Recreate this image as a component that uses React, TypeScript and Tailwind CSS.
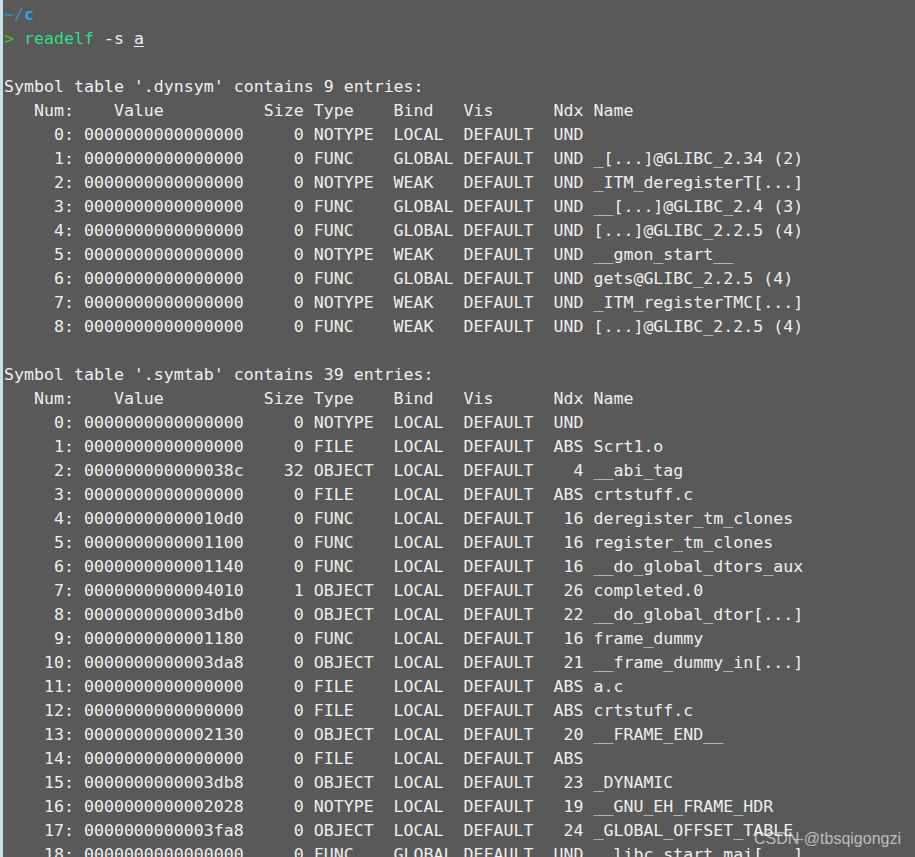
import React from 'react';

const dynsym: string[][] = [
  ['0', '0000000000000000', '0', 'NOTYPE', 'LOCAL', 'DEFAULT', 'UND', ''],
  ['1', '0000000000000000', '0', 'FUNC', 'GLOBAL', 'DEFAULT', 'UND', '_[...]@GLIBC_2.34 (2)'],
  ['2', '0000000000000000', '0', 'NOTYPE', 'WEAK', 'DEFAULT', 'UND', '_ITM_deregisterT[...]'],
  ['3', '0000000000000000', '0', 'FUNC', 'GLOBAL', 'DEFAULT', 'UND', '__[...]@GLIBC_2.4 (3)'],
  ['4', '0000000000000000', '0', 'FUNC', 'GLOBAL', 'DEFAULT', 'UND', '[...]@GLIBC_2.2.5 (4)'],
  ['5', '0000000000000000', '0', 'NOTYPE', 'WEAK', 'DEFAULT', 'UND', '__gmon_start__'],
  ['6', '0000000000000000', '0', 'FUNC', 'GLOBAL', 'DEFAULT', 'UND', 'gets@GLIBC_2.2.5 (4)'],
  ['7', '0000000000000000', '0', 'NOTYPE', 'WEAK', 'DEFAULT', 'UND', '_ITM_registerTMC[...]'],
  ['8', '0000000000000000', '0', 'FUNC', 'WEAK', 'DEFAULT', 'UND', '[...]@GLIBC_2.2.5 (4)'],
];

const symtab: string[][] = [
  ['0', '0000000000000000', '0', 'NOTYPE', 'LOCAL', 'DEFAULT', 'UND', ''],
  ['1', '0000000000000000', '0', 'FILE', 'LOCAL', 'DEFAULT', 'ABS', 'Scrt1.o'],
  ['2', '000000000000038c', '32', 'OBJECT', 'LOCAL', 'DEFAULT', '4', '__abi_tag'],
  ['3', '0000000000000000', '0', 'FILE', 'LOCAL', 'DEFAULT', 'ABS', 'crtstuff.c'],
  ['4', '00000000000010d0', '0', 'FUNC', 'LOCAL', 'DEFAULT', '16', 'deregister_tm_clones'],
  ['5', '0000000000001100', '0', 'FUNC', 'LOCAL', 'DEFAULT', '16', 'register_tm_clones'],
  ['6', '0000000000001140', '0', 'FUNC', 'LOCAL', 'DEFAULT', '16', '__do_global_dtors_aux'],
  ['7', '0000000000004010', '1', 'OBJECT', 'LOCAL', 'DEFAULT', '26', 'completed.0'],
  ['8', '0000000000003db0', '0', 'OBJECT', 'LOCAL', 'DEFAULT', '22', '__do_global_dtor[...]'],
  ['9', '0000000000001180', '0', 'FUNC', 'LOCAL', 'DEFAULT', '16', 'frame_dummy'],
  ['10', '0000000000003da8', '0', 'OBJECT', 'LOCAL', 'DEFAULT', '21', '__frame_dummy_in[...]'],
  ['11', '0000000000000000', '0', 'FILE', 'LOCAL', 'DEFAULT', 'ABS', 'a.c'],
  ['12', '0000000000000000', '0', 'FILE', 'LOCAL', 'DEFAULT', 'ABS', 'crtstuff.c'],
  ['13', '0000000000002130', '0', 'OBJECT', 'LOCAL', 'DEFAULT', '20', '__FRAME_END__'],
  ['14', '0000000000000000', '0', 'FILE', 'LOCAL', 'DEFAULT', 'ABS', ''],
  ['15', '0000000000003db8', '0', 'OBJECT', 'LOCAL', 'DEFAULT', '23', '_DYNAMIC'],
  ['16', '0000000000002028', '0', 'NOTYPE', 'LOCAL', 'DEFAULT', '19', '__GNU_EH_FRAME_HDR'],
  ['17', '0000000000003fa8', '0', 'OBJECT', 'LOCAL', 'DEFAULT', '24', '_GLOBAL_OFFSET_TABLE_'],
  ['18', '0000000000000000', '0', 'FUNC', 'GLOBAL', 'DEFAULT', 'UND', '__libc_start_mai[...]'],
];

const header = '   Num:    Value          Size Type    Bind   Vis      Ndx Name';

// readelf column layout
const fmt = (s: string[]) =>
  `${s[0].padStart(6)}: ${s[1]} ${s[2].padStart(5)} ${s[3].padEnd(7)} ${s[4].padEnd(6)} ${s[5].padEnd(8)} ${s[6].padStart(3)} ${s[7]}`;

const Line: React.FC<{ children?: React.ReactNode }> = ({ children }) => (
  <div className="h-[24px] whitespace-pre">{children ?? ' '}</div>
);

export default function App() {
  return (
    <div className="relative w-[915px] h-[857px] overflow-hidden bg-[#595959] border-l-[3px] border-[#c9e0e6]">
      <div
        className="pl-[1px] pt-[3px] text-[16.6px] leading-[24px] text-[#eeeeee]"
        style={{ fontFamily: '"DejaVu Sans Mono", "Liberation Mono", monospace' }}
      >
        <Line>
          <span className="text-[#1c9ad6]">~/</span>
          <span className="text-[#22a9ee] font-bold">c</span>
        </Line>
        <Line>
          <span className="text-[#4cc21c]">&gt;</span> <span className="text-[#2fdf8a]">readelf</span> -s{' '}
          <span className="underline underline-offset-2">a</span>
        </Line>
        <Line />
        <Line>Symbol table '.dynsym' contains 9 entries:</Line>
        <Line>{header}</Line>
        {dynsym.map(s => (
          <Line key={'d' + s[0]}>{fmt(s)}</Line>
        ))}
        <Line />
        <Line>Symbol table '.symtab' contains 39 entries:</Line>
        <Line>{header}</Line>
        {symtab.map(s => (
          <Line key={'s' + s[0]}>{fmt(s)}</Line>
        ))}
      </div>
      <div
        className="absolute right-[14px] bottom-[10px] text-[16px] leading-none text-white/60"
        style={{ fontFamily: '"Liberation Sans", Arial, sans-serif' }}
      >
        CSDN @tbsqigongzi
      </div>
    </div>
  );
}
